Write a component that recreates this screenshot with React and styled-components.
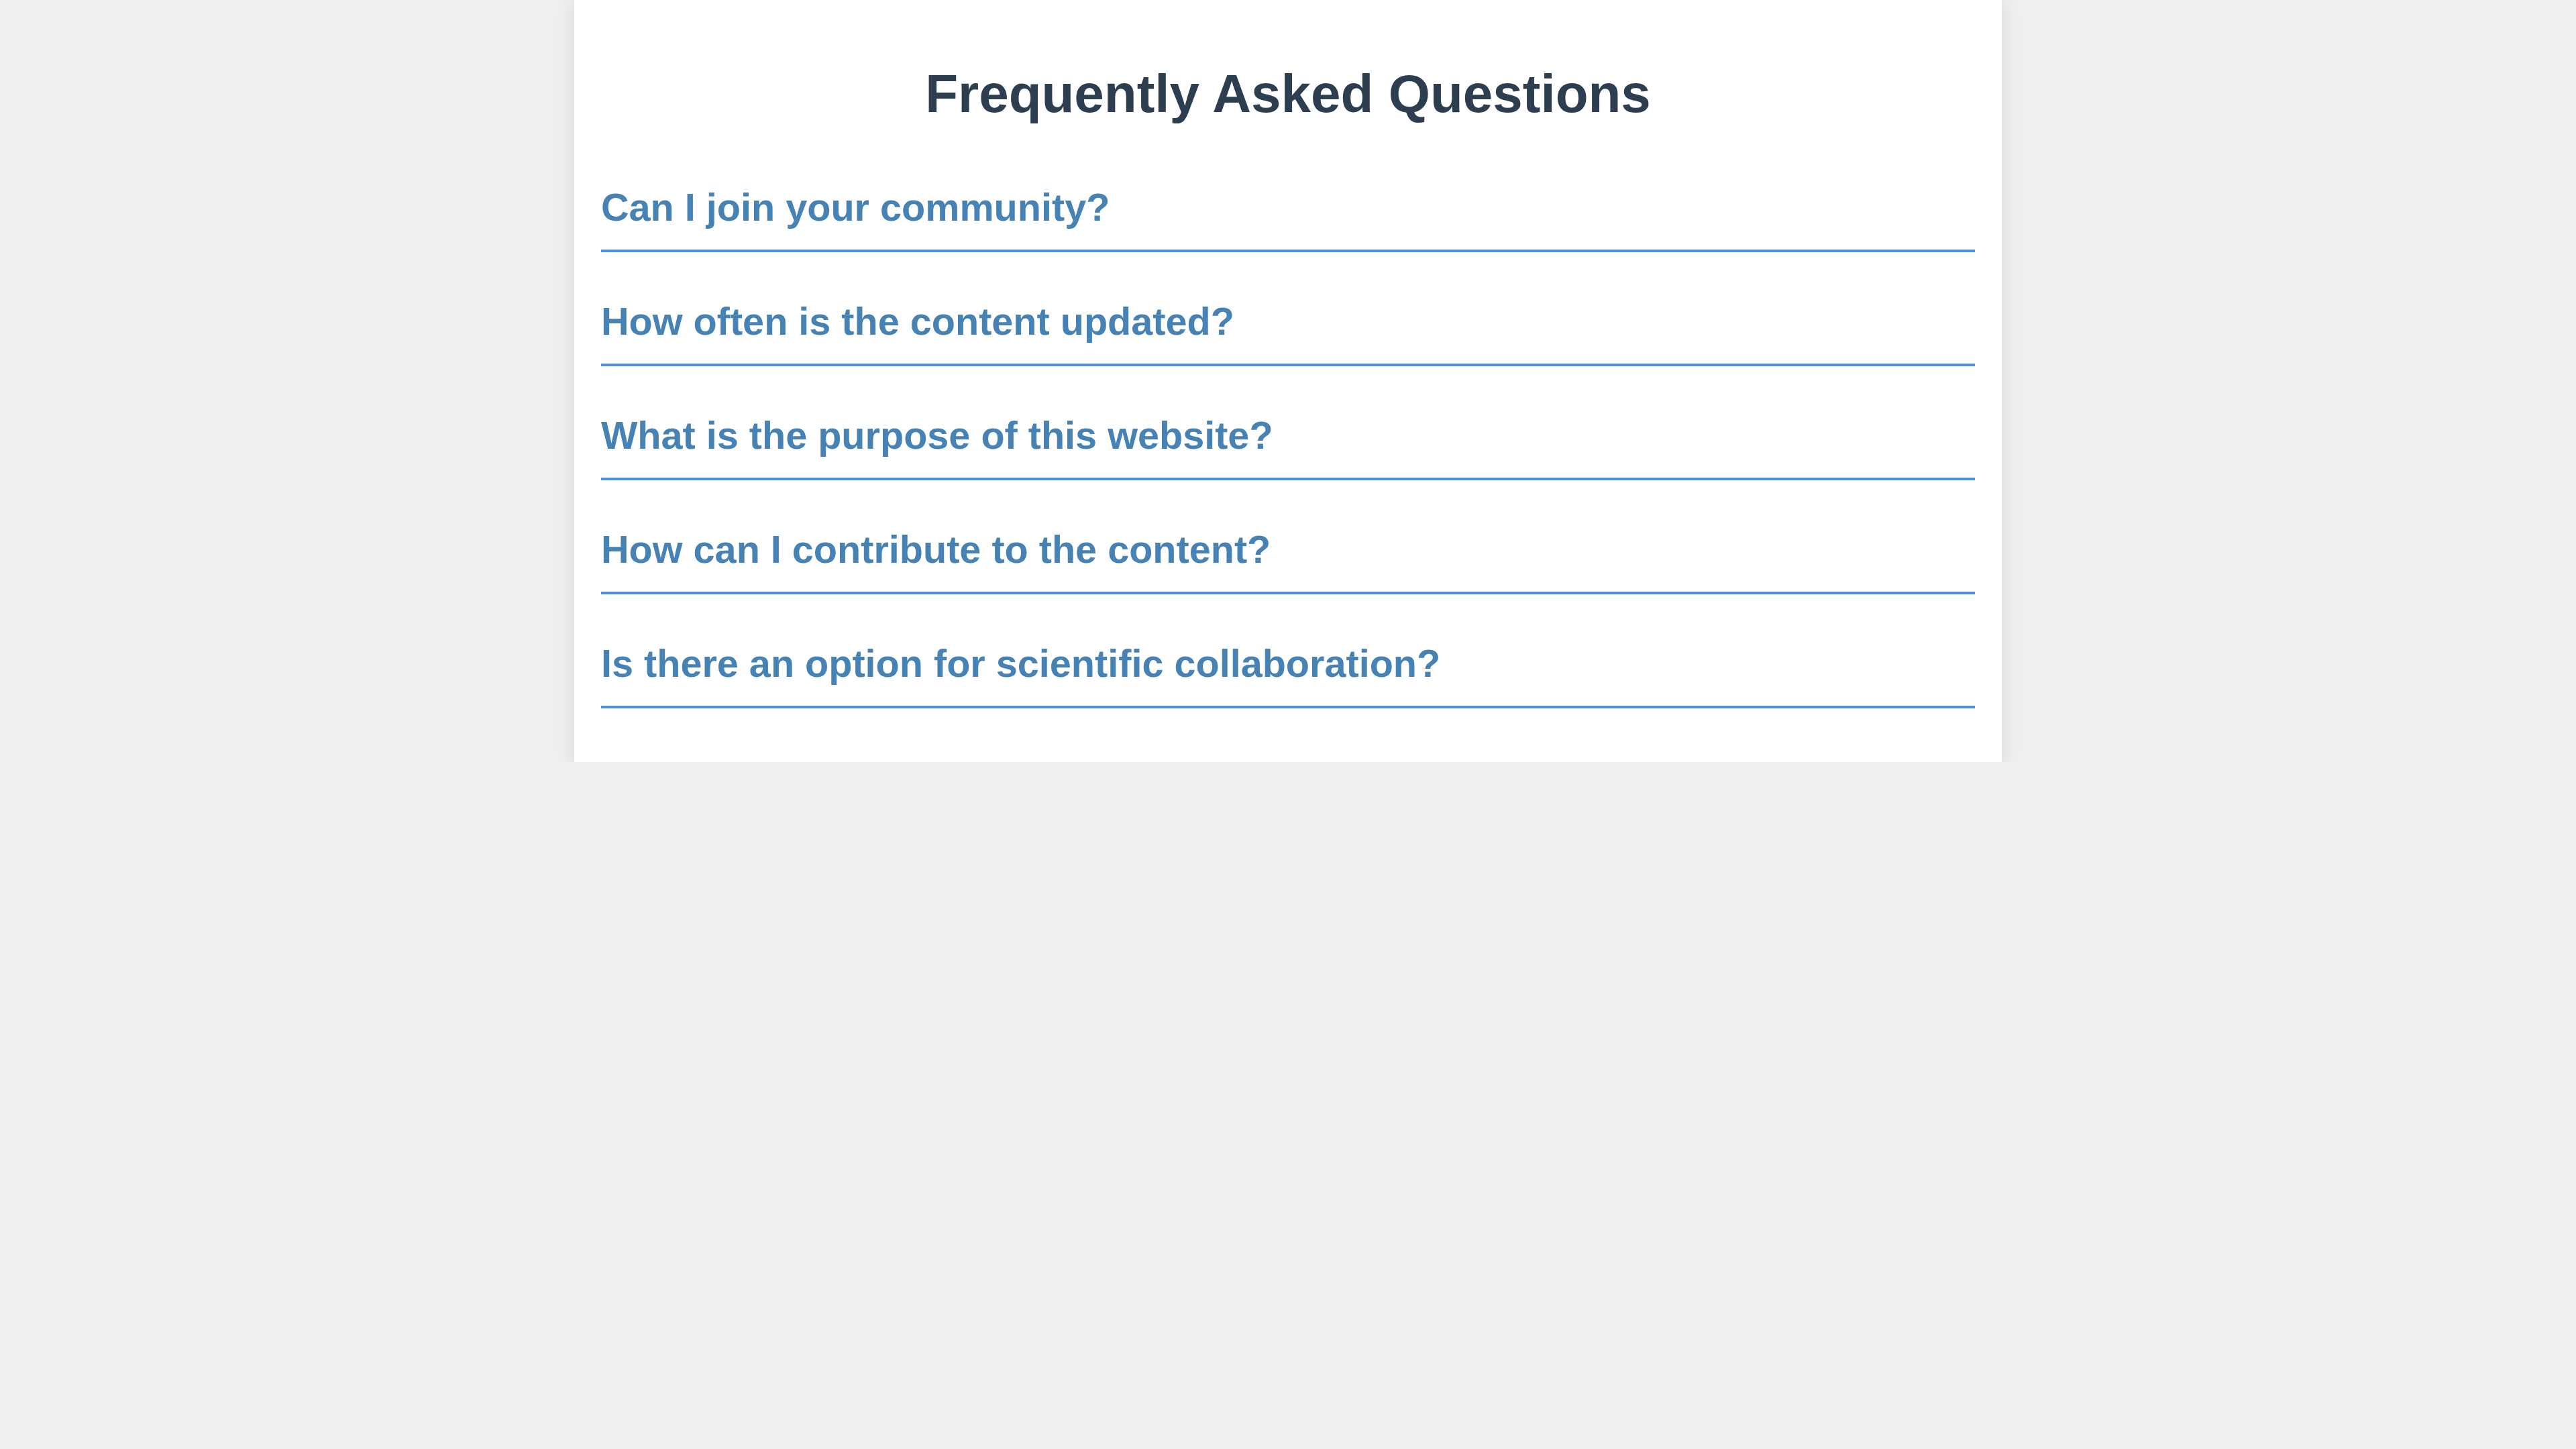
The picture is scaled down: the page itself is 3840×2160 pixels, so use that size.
import React from 'react';
import styled, { createGlobalStyle } from 'styled-components';

const questions = [
    'Can I join your community?',
    'How often is the content updated?',
    'What is the purpose of this website?',
    'How can I contribute to the content?',
    'Is there an option for scientific collaboration?',
];

const GlobalStyle = createGlobalStyle`
    html, body {
        margin: 0;
        padding: 0;
        background-color: #efefef;
        font-family: "Liberation Sans", Arial, sans-serif;
    }
`;

const App = () => {
    return (
        <>
            <GlobalStyle />
            <Card>
                <Title>Frequently Asked Questions</Title>
                <FaqList>
                    { questions.map((q) => (
                        <FaqItem key={q}>
                            <Question>{q}</Question>
                        </FaqItem>
                    )) }
                </FaqList>
            </Card>
        </>
    );
}

export default App;

const Card = styled.div`
    box-sizing: border-box;
    width: 2128px;
    margin: 0 auto;
    padding: 94px 40px 80px 40px;

    background-color: #fff;
    box-shadow: 0 5px 27px rgba(0, 0, 0, 0.1);
`;

const Title = styled.h1`
    margin: 0 0 60px 0;
    text-align: center;
    color: #2c3e50;
    font-size: 80px;
    font-weight: bold;
`;

const FaqList = styled.div`
    display: flex;
    flex-direction: column;
    gap: 40px;
`;

const FaqItem = styled.div`
    border-bottom: solid 4px #4a90d9;
    cursor: pointer;
`;

const Question = styled.h3`
    margin: 0;
    padding: 29px 0 29px 0;
    color: #4682b4;
    font-size: 57.6px;
    line-height: 68px;
    font-weight: bold;
`;
